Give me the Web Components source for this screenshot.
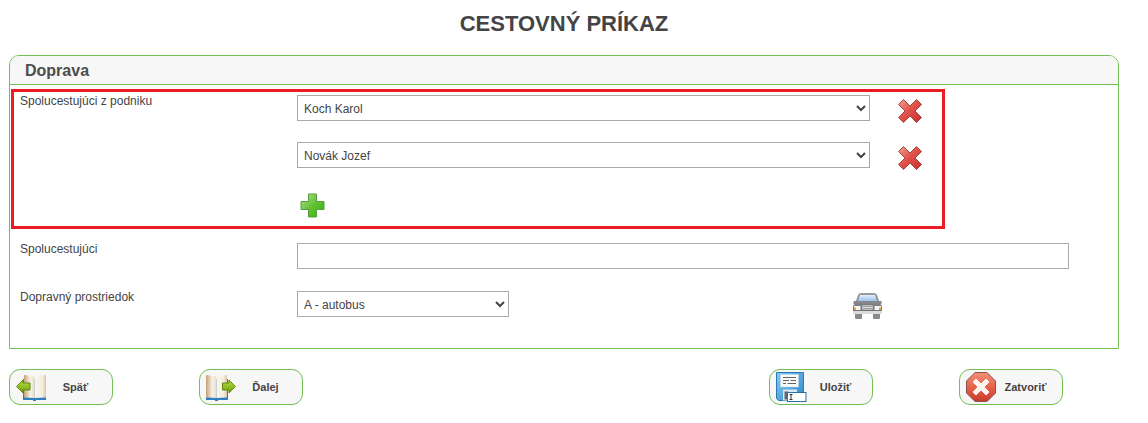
<!DOCTYPE html>
<html lang="sk">
<head>
<meta charset="utf-8">
<title>Cestovný príkaz</title>
<style>
    html, body { margin: 0; padding: 0; background: #fff; }
    body { font-family: "Liberation Sans", Arial, sans-serif; color: #444; }
</style>
</head>
<body>

<travel-page>
    <form-panel heading="Doprava">
        <highlight-box>
            <form-row label="Spolucestujúci z podniku">
                <select-row value="Koch Karol"></select-row>
                <select-row value="Novák Jozef"></select-row>
                <add-icon></add-icon>
            </form-row>
        </highlight-box>
        <form-row label="Spolucestujúci" class="second">
            <text-field></text-field>
        </form-row>
        <form-row label="Dopravný prostriedok" class="third">
            <vehicle-row value="A - autobus"></vehicle-row>
        </form-row>
    </form-panel>
    <button-bar>
        <bar-button style="grid-column:1" icon="back" label="Späť"></bar-button>
        <bar-button style="grid-column:2" icon="next" label="Ďalej"></bar-button>
        <bar-button style="grid-column:5" icon="save" label="Uložiť"></bar-button>
        <bar-button style="grid-column:6" icon="close" label="Zatvoriť"></bar-button>
    </button-bar>
</travel-page>

<script>
const selectCss = `
    select {
        display: block;
        box-sizing: border-box;
        height: 26px;
        margin: 0;
        padding: 2px 0 0 2px;
        border: 1px solid #a9a9a9;
        border-radius: 0;
        background: #fff;
        color: #444;
        font: 12px "Liberation Sans", Arial, sans-serif;
    }
`;

const deleteIcon = `
<svg width="26" height="26" viewBox="0 0 26 26">
    <defs>
        <linearGradient id="dx" x1="0" y1="0" x2="1" y2="1">
            <stop offset="0" stop-color="#f0a594"/>
            <stop offset=".45" stop-color="#e2534c"/>
            <stop offset="1" stop-color="#c62c2c"/>
        </linearGradient>
    </defs>
    <path d="M6.500 1.500 13 8 19.500 1.500 24.500 6.500 18 13 24.500 19.500 19.500 24.500 13 18 6.500 24.500 1.500 19.500 8 13 1.500 6.500Z"
          fill="url(#dx)" stroke="#a8443e" stroke-width="1" stroke-linejoin="round"/>
</svg>`;

const barIcons = {
    back: `
    <svg width="32" height="32" viewBox="0 0 32 32">
        <defs>
            <linearGradient id="pg" x1="0" x2="1"><stop offset="0" stop-color="#c4a178"/><stop offset=".6" stop-color="#f8f2e6"/><stop offset="1" stop-color="#ecdcc4"/></linearGradient>
            <linearGradient id="pr" x1="0" x2="1"><stop offset="0" stop-color="#fbf7ee"/><stop offset=".7" stop-color="#f5ecdc"/><stop offset="1" stop-color="#d8c4a6"/></linearGradient>
            <linearGradient id="ar" x1="0" y1="0" x2="0" y2="1"><stop offset="0" stop-color="#b9e03c"/><stop offset="1" stop-color="#6f9f10"/></linearGradient>
        </defs>
        <path d="M7 29V8H30V29Z" fill="#2f7fc0"/>
        <path d="M8 4 18.500 5.500V27L8 26.500Z" fill="url(#pg)"/>
        <path d="M18.500 5.500 30 4V26.500L18.500 27Z" fill="url(#pr)"/>
        <rect x="17" y="28" width="3" height="2" fill="#2f7fc0"/>
        <path d="M.700 15.500 7 9V12H14V19H7V22Z" fill="url(#ar)" stroke="#5d8a10" stroke-width="1" stroke-linejoin="round"/>
    </svg>`,
    next: `
    <svg width="32" height="32" viewBox="0 0 32 32">
        <defs>
            <linearGradient id="pn" x1="0" x2="1"><stop offset="0" stop-color="#c4a178"/><stop offset=".6" stop-color="#f8f2e6"/><stop offset="1" stop-color="#ecdcc4"/></linearGradient>
            <linearGradient id="pm" x1="0" x2="1"><stop offset="0" stop-color="#fbf7ee"/><stop offset=".7" stop-color="#f5ecdc"/><stop offset="1" stop-color="#d8c4a6"/></linearGradient>
            <linearGradient id="an" x1="0" y1="0" x2="0" y2="1"><stop offset="0" stop-color="#b9e03c"/><stop offset="1" stop-color="#6f9f10"/></linearGradient>
        </defs>
        <path d="M0 29V8H22V29Z" fill="#2f7fc0"/>
        <path d="M0 4 10.500 5.500V27L0 26.500Z" fill="url(#pn)"/>
        <path d="M10.500 5.500 21 4V26.500L10.500 27Z" fill="url(#pm)"/>
        <rect x="9" y="28" width="3" height="2" fill="#2f7fc0"/>
        <path d="M29.300 15.500 23 9V12H16.500V19H23V22Z" fill="url(#an)" stroke="#5d8a10" stroke-width="1" stroke-linejoin="round"/>
    </svg>`,
    save: `
    <svg width="32" height="32" viewBox="0 0 32 32">
        <defs><linearGradient id="fl" x1="0" y1="0" x2="1" y2="1"><stop offset="0" stop-color="#86ccf2"/><stop offset="1" stop-color="#2d86c8"/></linearGradient></defs>
        <path d="M.500 1.500H27.500V27L25.500 29.500H2.500L.500 27.500Z" fill="url(#fl)" stroke="#2a78b6"/>
        <rect x="4.500" y="3.500" width="18" height="12.500" fill="#fafafa" stroke="#b9d6ea" stroke-width=".5"/>
        <path d="M7 6.500H20M7 9.500H13M14.500 9.500H20M7 12.500H10M11.500 12.500H20" stroke="#666" stroke-width="1"/>
        <rect x="7" y="18.500" width="14" height="11" fill="#d9e8f2"/>
        <rect x="8.500" y="20.500" width="4" height="8" fill="#667"/>
        <rect x="11.500" y="21.500" width="18.500" height="9" fill="#fff" stroke="#2a6ea6" stroke-width="1"/>
        <path d="M13.500 23.500H16.500M15 23.500V28.500M13.500 28.500H16.500" stroke="#333" stroke-width="1" fill="none"/>
    </svg>`,
    close: `
    <svg width="32" height="32" viewBox="0 0 32 32">
        <defs><linearGradient id="oc" x1="0" y1="0" x2="0" y2="1"><stop offset="0" stop-color="#f29078"/><stop offset=".6" stop-color="#e35a44"/><stop offset="1" stop-color="#c63c2c"/></linearGradient></defs>
        <path d="M9 1.500H21L29.500 10V22L21 30.500H9L.500 22V10Z" fill="url(#oc)" stroke="#85544a" stroke-width="1"/>
        <path d="M10 8 15 13 20 8 23 11 18 16 23 21 20 24 15 19 10 24 7 21 12 16 7 11Z" fill="#fdf3f0" stroke="#fdf3f0" stroke-width="1" stroke-linejoin="round"/>
    </svg>`
};

class TravelPage extends HTMLElement {
    constructor() {
        super();
        this.attachShadow({mode: 'open'}).innerHTML = `
        <style>
            :host { display: block; width: 1148px; height: 423px; padding: 0 29px 0 9px; box-sizing: border-box; overflow: hidden; }
            h1 { margin: 0; height: 55px; padding-top: 11px; box-sizing: border-box; text-align: center;
                 font-size: 22px; line-height: 26px; font-weight: bold; color: #444; }
        </style>
        <h1>CESTOVNÝ PRÍKAZ</h1>
        <slot></slot>`;
    }
}
customElements.define('travel-page', TravelPage);

class FormPanel extends HTMLElement {
    constructor() {
        super();
        this.attachShadow({mode: 'open'}).innerHTML = `
        <style>
            :host { display: block; box-sizing: border-box; height: 294px; border: 1px solid #74bf54; border-radius: 10px 10px 0 0; }
            header { height: 29px; box-sizing: border-box; padding: 6px 0 0 15px; background: #f7f7f7;
                     border-bottom: 1px solid #74bf54; border-radius: 9px 9px 0 0;
                     font-size: 16px; line-height: 18px; font-weight: bold; color: #4d4d4d; }
            main { padding: 4px 0 0 1px; }
        </style>
        <header>${this.getAttribute('heading')}</header>
        <main><slot></slot></main>`;
    }
}
customElements.define('form-panel', FormPanel);

class HighlightBox extends HTMLElement {
    constructor() {
        super();
        this.attachShadow({mode: 'open'}).innerHTML = `
        <style>
            :host { display: block; box-sizing: border-box; width: 934px; height: 140px; border: 3px solid #ed1c24; padding: 3px 0 0 6px; }
        </style>
        <slot></slot>`;
    }
}
customElements.define('highlight-box', HighlightBox);

class FormRow extends HTMLElement {
    constructor() {
        super();
        this.attachShadow({mode: 'open'}).innerHTML = `
        <style>
            :host { display: grid; grid-template-columns: 277px 1fr; align-items: start; }
            :host(.second) { margin: 14px 0 0 9px; }
            :host(.third) { margin: 22px 0 0 9px; }
            .label { font-size: 12px; line-height: 14px; color: #444; margin-top: -1px; }
            .controls { display: flex; flex-direction: column; gap: 18px; }
        </style>
        <div class="label">${this.getAttribute('label')}</div>
        <div class="controls"><slot></slot></div>`;
    }
}
customElements.define('form-row', FormRow);

class SelectRow extends HTMLElement {
    constructor() {
        super();
        const value = this.getAttribute('value');
        this.attachShadow({mode: 'open'}).innerHTML = `
        <style>
            ${selectCss}
            :host { display: flex; align-items: flex-start; gap: 27px; }
            select { width: 573px; }
            svg { display: block; margin-top: 3px; }
        </style>
        <select><option>${value}</option></select>
        ${deleteIcon}`;
    }
}
customElements.define('select-row', SelectRow);

class AddIcon extends HTMLElement {
    constructor() {
        super();
        this.attachShadow({mode: 'open'}).innerHTML = `
        <style>
            :host { display: block; margin: 4px 0 0 3px; width: 25px; height: 25px; }
            svg { display: block; }
        </style>
        <svg width="25" height="25" viewBox="0 0 25 25">
            <defs>
                <linearGradient id="pl" x1="0" y1="0" x2="1" y2="1">
                    <stop offset="0" stop-color="#b4e09a"/>
                    <stop offset=".5" stop-color="#62c234"/>
                    <stop offset="1" stop-color="#37b006"/>
                </linearGradient>
            </defs>
            <path d="M8.500 1H16.500V8.500H24V16.500H16.500V24H8.500V16.500H1V8.500H8.500Z" fill="url(#pl)" stroke="#559c3c" stroke-width="1" stroke-linejoin="round"/>
        </svg>`;
    }
}
customElements.define('add-icon', AddIcon);

class TextField extends HTMLElement {
    constructor() {
        super();
        this.attachShadow({mode: 'open'}).innerHTML = `
        <style>
            :host { display: block; }
            input { display: block; box-sizing: border-box; width: 772px; height: 26px; margin: 0; padding: 0 6px;
                    border: 1px solid #a9a9a9; border-radius: 0; font: 12px "Liberation Sans", Arial, sans-serif; }
        </style>
        <input type="text">`;
    }
}
customElements.define('text-field', TextField);

class VehicleRow extends HTMLElement {
    constructor() {
        super();
        this.attachShadow({mode: 'open'}).innerHTML = `
        <style>
            ${selectCss}
            :host { display: flex; align-items: flex-start; gap: 343px; }
            select { width: 212px; }
            svg { display: block; margin-top: 1px; }
        </style>
        <select><option>${this.getAttribute('value')}</option></select>
        <svg width="31" height="28" viewBox="0 0 31 28">
            <defs>
                <linearGradient id="gl" x1="0" y1="0" x2="0" y2="1"><stop offset="0" stop-color="#e2eefa"/><stop offset="1" stop-color="#9dc0ea"/></linearGradient>
                <linearGradient id="bd" x1="0" y1="0" x2="0" y2="1"><stop offset="0" stop-color="#9a9ea2"/><stop offset="1" stop-color="#6a6e72"/></linearGradient>
            </defs>
            <rect x="3" y="21" width="7" height="6" rx="1" fill="#8a8a8a"/>
            <rect x="21" y="21" width="7" height="6" rx="1" fill="#8a8a8a"/>
            <path d="M6 3Q6.500 1 9 1H22Q24.500 1 25 3L27 9H29.500V12H28.500L30 14V22H1V14L2.500 12H1.500V9H4Z" fill="url(#bd)"/>
            <path d="M8 3H23L25 9H6Z" fill="url(#gl)"/>
            <rect x="10" y="13" width="11" height="5" fill="#dcdcdc" stroke="#666" stroke-width=".5"/>
            <path d="M11 14.500H20M11 16.500H20" stroke="#777" stroke-width=".6"/>
            <rect x="2" y="14" width="6.500" height="4" fill="#f6f6f6"/>
            <rect x="22.500" y="14" width="6.500" height="4" fill="#f6f6f6"/>
            <rect x="2" y="15.500" width="2" height="2.500" fill="#f0a040"/>
            <rect x="27" y="15.500" width="2" height="2.500" fill="#f0a040"/>
            <rect x="1" y="19" width="29" height="3" fill="#dcdcdc"/>
        </svg>`;
    }
}
customElements.define('vehicle-row', VehicleRow);

class ButtonBar extends HTMLElement {
    constructor() {
        super();
        this.attachShadow({mode: 'open'}).innerHTML = `
        <style>
            :host { display: grid; grid-template-columns: repeat(6, 190px); margin-top: 20px; }
        </style>
        <slot></slot>`;
    }
}
customElements.define('button-bar', ButtonBar);

class BarButton extends HTMLElement {
    constructor() {
        super();
        const icon = this.getAttribute('icon');
        this.attachShadow({mode: 'open'}).innerHTML = `
        <style>
            :host { display: block; box-sizing: border-box; width: 104px; height: 36px;
                    border: 1px solid #74bf54; border-radius: 11px; background: #f7f7f7; cursor: pointer; }
            .inner { display: grid; grid-template-columns: 39px 1fr; height: 100%; align-items: center; }
            .ico { display: flex; align-items: center; padding-left: 6px; height: 32px; }
            svg { display: block; flex: none; }
            .text { text-align: center; font-size: 11px; line-height: 13px; font-weight: bold; color: #444; padding-right: 10px; }
        </style>
        <div class="inner">
            <div class="ico">${barIcons[icon]}</div>
            <div class="text">${this.getAttribute('label')}</div>
        </div>`;
    }
}
customElements.define('bar-button', BarButton);
</script>
</body>
</html>
